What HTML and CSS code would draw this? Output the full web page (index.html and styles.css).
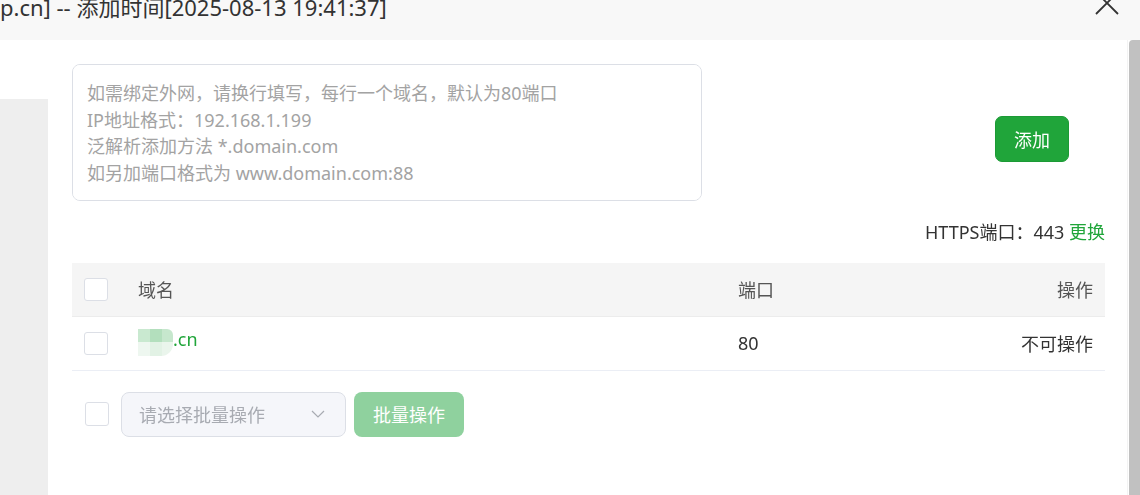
FILE: index.html
```html
<!DOCTYPE html>
<html lang="zh-CN">
<head>
<meta charset="utf-8">
<link rel="stylesheet" href="styles.css">
</head>
<body>
<header class="dlg-head">
  <div class="dlg-title">p.cn] -- 添加时间[2025-08-13 19:41:37]</div>
  <button class="dlg-close" aria-label="关闭">
    <svg width="26" height="26" viewBox="0 0 26 26"><path d="M2 2 L24 24 M24 2 L2 24" stroke="#333" stroke-width="1.8" fill="none"/></svg>
  </button>
</header>
<div class="dlg-body">
  <div class="side"></div>
  <main class="content">
    <div class="add-row">
      <textarea class="domains" placeholder="如需绑定外网，请换行填写，每行一个域名，默认为80端口&#10;IP地址格式：192.168.1.199&#10;泛解析添加方法 *.domain.com&#10;如另加端口格式为 www.domain.com:88"></textarea>
      <button class="btn-add">添加</button>
    </div>
    <div class="https-line">HTTPS端口：443 <span class="link">更换</span></div>
    <table class="tbl">
      <thead>
        <tr>
          <th class="c-check"><span class="cbox"></span></th>
          <th class="c-domain">域名</th>
          <th class="c-port">端口</th>
          <th class="c-op">操作</th>
        </tr>
      </thead>
      <tbody>
        <tr>
          <td class="c-check"><span class="cbox"></span></td>
          <td class="c-domain"><span class="blur"><i class="b1"></i><i class="b2"></i><i class="b3"></i><i class="b4"></i><i class="b5"></i><i class="b6"></i></span><span class="dom">.cn</span></td>
          <td class="c-port">80</td>
          <td class="c-op">不可操作</td>
        </tr>
      </tbody>
    </table>
    <div class="batch">
      <span class="cbox"></span>
      <div class="select">
        <span class="ph">请选择批量操作</span>
        <svg class="chev" width="14" height="8" viewBox="0 0 14 8"><path d="M1 1 L7 7 L13 1" stroke="#a8abb2" stroke-width="1.2" fill="none"/></svg>
      </div>
      <button class="btn-batch">批量操作</button>
    </div>
  </main>
  <div class="scroll"><div class="thumb"></div></div>
</div>
</body>
</html>
```
FILE: styles.css
```css
* { box-sizing: border-box; }
html, body { margin: 0; padding: 0; }
body {
  width: 1140px;
  height: 495px;
  overflow: hidden;
  background: #fff;
  font-family: "Noto Sans", "Noto Sans CJK SC", sans-serif;
  color: #333;
}
.dlg-head {
  height: 40px;
  background: #f8f8f8;
  display: flex;
  justify-content: space-between;
  align-items: flex-start;
  overflow: hidden;
}
.dlg-title {
  font-size: 22px;
  line-height: 24px;
  margin-top: -5px;
  color: #333;
  white-space: nowrap;
}
.dlg-close {
  border: 0;
  background: none;
  padding: 0;
  margin: -10px 20px 0 0;
  width: 26px;
  height: 26px;
}
.dlg-close svg { display: block; }
.dlg-body {
  display: flex;
  height: 455px;
}
.side {
  width: 48px;
  margin-top: 59px;
  background: #eeeeee;
  flex: none;
}
.content {
  width: 1033px;
  margin-left: 24px;
  padding-top: 24px;
  flex: none;
}
.add-row {
  display: flex;
  align-items: center;
  justify-content: space-between;
}
.domains {
  width: 630px;
  height: 137px;
  border: 1px solid #dcdfe6;
  border-radius: 8px;
  padding: 15px 14px;
  font-family: inherit;
  font-size: 18px;
  line-height: 26.5px;
  resize: none;
  outline: none;
  color: #333;
}
.domains::placeholder { color: #a3a3a3; }
.btn-add {
  width: 74px;
  height: 46px;
  margin: 13px 36px 0 0;
  background: #20a53a;
  border: 1px solid #1c9a35;
  border-radius: 7px;
  color: #fff;
  font-family: inherit;
  font-size: 18px;
}
.https-line {
  text-align: right;
  font-size: 18px;
  line-height: 22px;
  margin-top: 20px;
  color: #333;
}
.link { color: #20a53a; }
.tbl {
  width: 100%;
  border-collapse: collapse;
  margin-top: 20px;
  font-size: 18px;
}
.tbl th {
  background: #f5f5f5;
  font-weight: normal;
  color: #555;
  height: 53px;
  border-bottom: 1px solid #ececec;
  text-align: left;
  padding: 0;
}
.tbl td {
  height: 54px;
  border-bottom: 1px solid #ebeef5;
  padding: 0;
  color: #333;
}
.c-check { width: 66px; padding-left: 12px !important; }
.c-check .cbox { display: block; }
.c-domain { width: 600px; }
.c-op { text-align: right !important; padding-right: 12px !important; }
.cbox {
  display: inline-block;
  width: 24px;
  height: 23px;
  border: 1px solid #dcdfe6;
  border-radius: 3px;
  background: #fff;
}
.blur {
  display: inline-grid;
  grid-template-columns: 12px 12px 11px;
  grid-template-rows: 13px 14px;
  vertical-align: middle;
  margin-top: -4px;
  border-radius: 0 6px 12px 0;
  overflow: hidden;
}
.blur i { display: block; }
.b1 { background: #c9e9d0; }
.b2 { background: #b3dfbd; }
.b3 { background: #c6e7cd; }
.b4 { background: #eef7f0; }
.b5 { background: #e2f2e5; }
.b6 { background: #eaf5ec; }
.dom { color: #20a53a; vertical-align: middle; position: relative; top: -5px; }
.batch {
  display: flex;
  align-items: center;
  margin-top: 21px;
  padding-left: 13px;
}
.batch .cbox { width: 24px; height: 24px; }
.select {
  width: 225px;
  height: 45px;
  margin-left: 12px;
  background: #f5f6fa;
  border: 1px solid #dcdfe6;
  border-radius: 8px;
  display: flex;
  align-items: center;
  justify-content: space-between;
  padding: 0 20px 0 17px;
}
.ph { color: #a8abb2; font-size: 18px; }
.chev { display: block; }
.btn-batch {
  width: 110px;
  height: 45px;
  margin-left: 8px;
  background: #8fd19e;
  border: 0;
  border-radius: 8px;
  color: #fff;
  font-family: inherit;
  font-size: 18px;
}
.scroll {
  margin-left: auto;
  width: 13px;
  border-left: 1px solid #f3f3f3;
  padding-left: 1px;
  flex: none;
}
.thumb {
  height: 100%;
  background: #c1c1c1;
  border-radius: 4px 0 0 0;
}
```
